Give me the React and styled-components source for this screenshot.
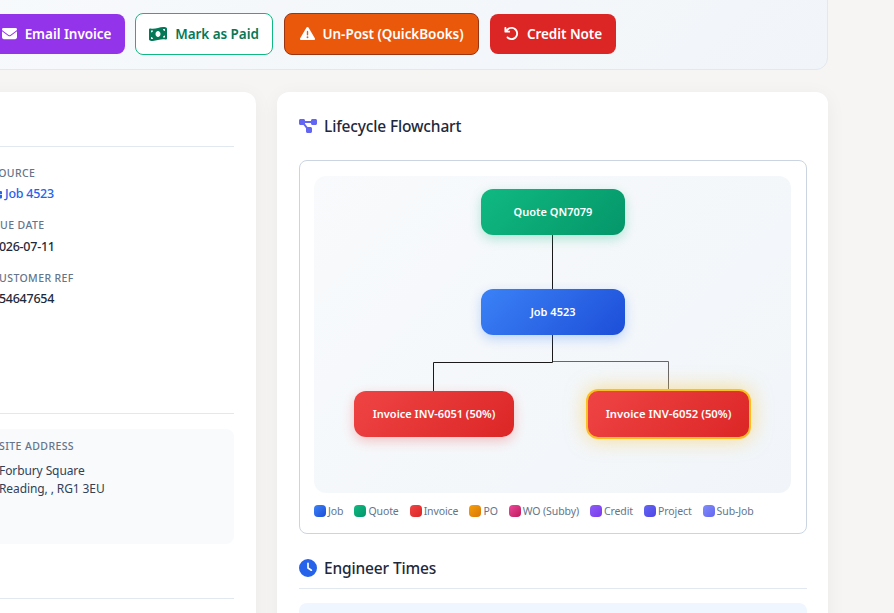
import React from 'react'
import styled, { createGlobalStyle } from 'styled-components'
import { FaEnvelope, FaMoneyBillWave, FaTriangleExclamation, FaArrowRotateLeft, FaDiagramProject, FaClock, FaBriefcase } from 'react-icons/fa6'

const Global = createGlobalStyle`
  html, body {
    margin: 0;
    height: 613px;
    overflow: hidden;
    background: #f7f5f3;
    font-family: "Noto Sans", "Open Sans", sans-serif;
  }
`

const Page = styled.div`
  width: 972px;
  margin: -29px 0 0 -144px;
  display: flex;
  flex-direction: column;
  gap: 22px;
`

const ActionBar = styled.div`
  height: 99px;
  box-sizing: border-box;
  padding: 26px 0 0 131px;
  display: flex;
  align-items: center;
  gap: 10px;
  border: 1px solid #e2e8f0;
  border-radius: 12px;
  background: linear-gradient(135deg, #f8fafc, #f1f5f9);
`

const Button = styled.button`
  height: ${p => (p.$border ? 42 : 40)}px;
  width: ${p => p.$w}px;
  box-sizing: border-box;
  display: flex;
  align-items: center;
  justify-content: center;
  gap: 8px;
  padding: 0;
  margin-left: ${p => p.$nudge || 0}px;
  border: ${p => (p.$border ? `1px solid ${p.$border}` : 'none')};
  border-radius: 8px;
  background: ${p => p.$bg};
  color: ${p => p.$fg || '#fff'};
  font-family: inherit;
  font-size: 13.5px;
  font-weight: 600;
  letter-spacing: -0.05px;

  svg { font-size: ${p => p.$icon || 15}px; flex: none; }
`

const Columns = styled.div`
  display: grid;
  grid-template-columns: 400px 551px;
  gap: 21px;
  align-items: start;
`

const Card = styled.section`
  background: #fff;
  border-radius: 12px;
  box-shadow: 0 4px 20px rgba(0, 0, 0, 0.05);
  padding: 22px 21px 22px 22px;
  height: ${p => p.$h}px;
  box-sizing: border-box;
`

const LeftCard = styled(Card)`
  padding-right: 22px;
`

const Rule = styled.div`
  height: 1px;
  background: #e2e8f0;
  margin-top: ${p => p.$top}px;
`

const Fields = styled.div`
  height: 266px;
  padding: 18.9px 0 0 114px;
  box-sizing: border-box;
  display: flex;
  flex-direction: column;
  gap: 15px;
`

const Field = styled.div`
  display: flex;
  flex-direction: column;
  gap: 4.5px;
`

const Label = styled.div`
  font-size: 10.5px;
  line-height: 15px;
  font-weight: 500;
  letter-spacing: 0.4px;
  text-transform: uppercase;
  color: #64748b;
`

const Value = styled.div`
  font-size: 12.5px;
  line-height: 18px;
  font-weight: 500;
  letter-spacing: -0.25px;
  color: ${p => p.$color || '#1e293b'};
  display: flex;
  align-items: center;
  gap: 3px;
  svg { font-size: 10px; }
`

const SiteBox = styled.div`
  margin: 15px 0 0 105px;
  height: 115px;
  box-sizing: border-box;
  padding: 10px 16px;
  border-radius: 8px;
  background: #f8fafc;
`

const Address = styled.div`
  margin-top: 8px;
  font-size: 12px;
  line-height: 18px;
  letter-spacing: -0.1px;
  color: #334155;
`

const Heading = styled.h3`
  margin: 0;
  display: flex;
  align-items: center;
  gap: 7px;
  font-size: 15.5px;
  line-height: 24px;
  font-weight: 550;
  letter-spacing: -0.15px;
  color: #1e293b;

  svg { font-size: 18px; color: ${p => p.$icon}; flex: none; }
`

const FlowBox = styled.div`
  margin-top: 22px;
  height: 374px;
  box-sizing: border-box;
  padding: 15px 15px 0 14px;
  border: 1px solid #cbd5e1;
  border-radius: 8px;
`

const Canvas = styled.div`
  position: relative;
  height: 317px;
  border-radius: 12px;
  background: linear-gradient(135deg, #f8fafc, #f1f5f9);
`

const Lines = styled.svg`
  position: absolute;
  inset: 0;
`

const Node = styled.div`
  position: absolute;
  left: ${p => p.$x}px;
  top: ${p => p.$y}px;
  width: ${p => p.$w}px;
  height: ${p => p.$h || 46}px;
  box-sizing: border-box;
  padding-bottom: 2px;
  display: flex;
  align-items: center;
  justify-content: center;
  border-radius: 12px;
  border: ${p => (p.$current ? '2px solid #fbbf24' : 'none')};
  background: linear-gradient(135deg, ${p => p.$from}, ${p => p.$to});
  box-shadow: ${p => (p.$current ? '0 0 20px rgba(251, 191, 36, 0.5)' : `0 4px 12px ${p.$glow}`)};
  color: #fff;
  font-size: ${p => (p.$current ? 11.3 : 11)}px;
  font-weight: 600;
`

const Legend = styled.div`
  margin-top: 11px;
  display: flex;
  gap: 11px;
`

const LegendItem = styled.div`
  display: flex;
  align-items: center;
  gap: 2px;
  font-size: 10.5px;
  line-height: 14px;
  letter-spacing: -0.1px;
  color: #64748b;
`

const Swatch = styled.span`
  width: 12px;
  height: 12px;
  border-radius: 4px;
  background: linear-gradient(135deg, ${p => p.$from}, ${p => p.$to});
`

const TimesHead = styled.div`
  margin-top: 22px;
  padding-bottom: 8px;
  border-bottom: 1px solid #e2e8f0;
`

const TimesBox = styled.div`
  margin-top: 14px;
  height: 60px;
  border-radius: 8px;
  background: #eff6ff;
`

const legend = [
  ['Job', '#3b82f6', '#1d4ed8'],
  ['Quote', '#10b981', '#059669'],
  ['Invoice', '#ef4444', '#dc2626'],
  ['PO', '#f59e0b', '#d97706'],
  ['WO (Subby)', '#ec4899', '#be185d'],
  ['Credit', '#8b5cf6', '#7c3aed'],
  ['Project', '#6366f1', '#4f46e5'],
  ['Sub-Job', '#818cf8', '#6366f1'],
]

export default function App() {
  return (
    <Page>
      <Global />
      <ActionBar>
        <Button $w={137} $bg="#9333ea"><FaEnvelope />Email Invoice</Button>
        <Button $w={138} $bg="#fff" $fg="#047857" $border="#10b981" $icon={18}><FaMoneyBillWave />Mark as Paid</Button>
        <Button $w={195} $nudge={1} $bg="#ea580c" $border="#9a3412"><FaTriangleExclamation />Un-Post (QuickBooks)</Button>
        <Button $w={126} $nudge={1} $bg="#dc2626"><FaArrowRotateLeft />Credit Note</Button>
      </ActionBar>
      <Columns>
        <LeftCard $h={620}>
          <Rule $top={32} />
          <Fields>
            <Field>
              <Label>Source</Label>
              <Value $color="#2563eb"><FaBriefcase />Job 4523</Value>
            </Field>
            <Field>
              <Label>Due Date</Label>
              <Value>2026-07-11</Value>
            </Field>
            <Field>
              <Label>Customer Ref</Label>
              <Value>654647654</Value>
            </Field>
          </Fields>
          <Rule $top={0} />
          <SiteBox>
            <Label>Site Address</Label>
            <Address>Forbury Square<br />Reading, , RG1 3EU</Address>
          </SiteBox>
          <Rule $top={54} />
        </LeftCard>
        <Card $h={620}>
          <Heading $icon="#6366f1"><FaDiagramProject />Lifecycle Flowchart</Heading>
          <FlowBox>
            <Canvas>
              <Lines width="477" height="317">
                <path d="M238.5 185.5H354.5V213" fill="none" stroke="#666" strokeWidth="1" />
                <path d="M238.5 59V113M238.5 159V186.5H119.5V215" fill="none" stroke="#1a1a1a" strokeWidth="1" />
              </Lines>
              <Node $x={167} $y={13} $w={144} $from="#10b981" $to="#059669" $glow="rgba(16,185,129,.3)">Quote QN7079</Node>
              <Node $x={167} $y={113} $w={144} $from="#3b82f6" $to="#1d4ed8" $glow="rgba(59,130,246,.3)">Job 4523</Node>
              <Node $x={40} $y={215} $w={160} $from="#ef4444" $to="#dc2626" $glow="rgba(239,68,68,.3)">Invoice INV-6051 (50%)</Node>
              <Node $x={272} $y={213} $w={165} $h={50} $current $from="#ef4444" $to="#dc2626">Invoice INV-6052 (50%)</Node>
            </Canvas>
            <Legend>
              {legend.map(([name, from, to]) => (
                <LegendItem key={name}><Swatch $from={from} $to={to} />{name}</LegendItem>
              ))}
            </Legend>
          </FlowBox>
          <TimesHead>
            <Heading $icon="#2563eb"><FaClock />Engineer Times</Heading>
          </TimesHead>
          <TimesBox />
        </Card>
      </Columns>
    </Page>
  )
}
